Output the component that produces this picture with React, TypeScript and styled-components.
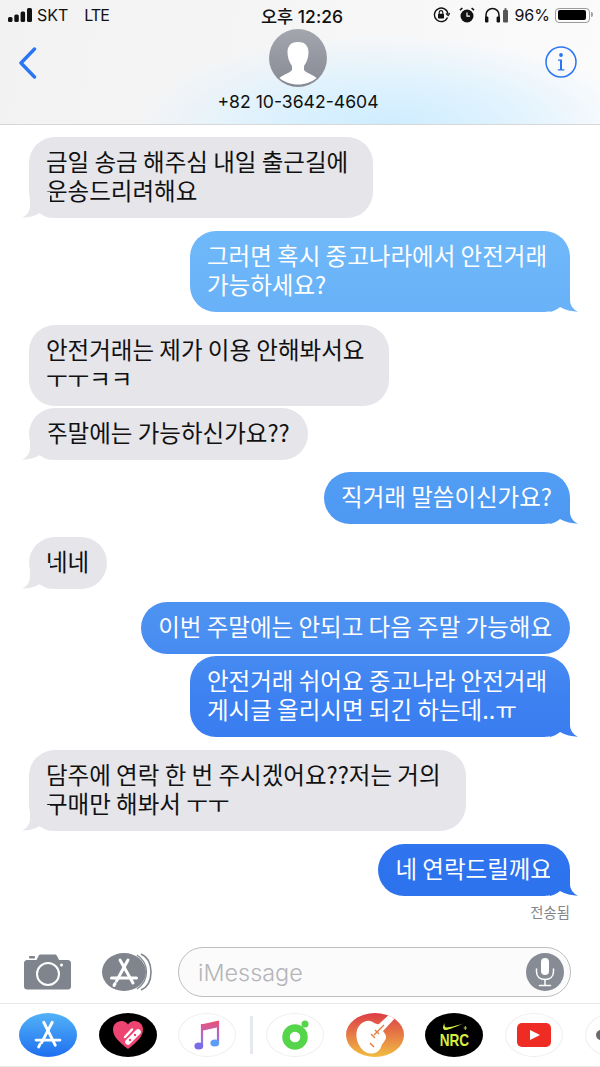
import styled, {createGlobalStyle, css} from "styled-components";

const GlobalStyle = createGlobalStyle`
  html, body {
    margin: 0;
    padding: 0;
    background: #fff;
  }

  body {
    font-family: "Noto Sans CJK KR", "Noto Sans", sans-serif;
  }
`

const Screen = styled.div`
  width: 600px;
  height: 1067px;
  overflow: hidden;
  display: flex;
  flex-direction: column;
  background: #fff;
`

const Header = styled.header`
  height: 124px;
  flex-shrink: 0;
  border-bottom: 1px solid #d8d8da;
  background:
    radial-gradient(ellipse 250px 95px at 385px 130px, #cdecff 0%, rgba(214, 240, 255, 0.8) 45%, rgba(240, 248, 252, 0) 100%),
    linear-gradient(100deg, #f2f2f3 0%, #f5f5f6 45%, #fbfbfc 100%);
`

const StatusBar = styled.div`
  height: 30px;
  display: grid;
  grid-template-columns: 1fr auto 1fr;
  align-items: center;
  padding: 0 10px 0 8px;
  font-family: Inter, "Noto Sans CJK KR", sans-serif;
  font-size: 16px;
  color: #111;
`

const StatusLeft = styled.div`
  display: flex;
  align-items: center;
  gap: 5px;
`

const Carrier = styled.span<{ $gap?: number; $tight?: boolean }>`
  margin-left: ${({$gap}) => $gap ?? 0}px;
  letter-spacing: ${({$tight}) => $tight ? -1 : 0}px;
`

const Clock = styled.div`
  font-weight: 500;
  font-size: 17.5px;
  margin-left: 6px;
`

const StatusRight = styled.div`
  display: flex;
  align-items: center;
  justify-content: flex-end;
  gap: 9px;
`

const Percent = styled.span`
  margin-right: -4px;
  margin-left: -3px;
`

const Battery = styled.div`
  position: relative;
  width: 35px;
  height: 15px;
  box-sizing: border-box;
  border: 1.5px solid #9a9a9a;
  border-radius: 4px;
  padding: 1.5px;

  &::before {
    content: "";
    display: block;
    height: 100%;
    width: 96%;
    border-radius: 2px;
    background: #000;
  }

  &::after {
    content: "";
    position: absolute;
    right: -4px;
    top: 3.5px;
    width: 2px;
    height: 5px;
    border-radius: 0 2px 2px 0;
    background: #a0a0a0;
  }
`

const NavRow = styled.div`
  display: grid;
  grid-template-columns: 1fr auto 1fr;
  align-items: start;
  padding: 0 23px 0 19px;
`

const BackButton = styled.div`
  margin-top: 17px;
  height: 32px;
`

const InfoButton = styled.div`
  margin-top: 16px;
  justify-self: end;
`

const Contact = styled.div`
  display: flex;
  flex-direction: column;
  align-items: center;
`

const Avatar = styled.div`
  width: 58px;
  height: 58px;
  border-radius: 50%;
  overflow: hidden;
  margin-top: -1px;
  background: linear-gradient(#a3a6ad, #878a94);
`

const Phone = styled.div`
  margin-top: 6px;
  font-family: Inter, sans-serif;
  font-size: 17.6px;
  line-height: 18px;
  color: #111;
`

const MessageList = styled.main`
  flex: 1;
  display: flex;
  flex-direction: column;
  padding: 12px 30px 0 29px;
`

const Bubble = styled.div<{ $mine?: boolean; $tail?: boolean; $gap?: number; $multi: boolean }>`
  position: relative;
  width: fit-content;
  box-sizing: border-box;
  margin-top: ${({$gap}) => $gap ?? 13}px;
  border-radius: 26px;
  padding: 10px ${({$multi}) => $multi ? 25 : 18}px 13px 17px;
  font-size: 23.5px;
  line-height: 29px;
  white-space: pre;
  color: #111;
  background: #e5e5ea;

  &:first-child {
    margin-top: 0;
  }

  ${({$mine, $multi}) => $mine && css`
    align-self: flex-end;
    padding-left: 17px;
    padding-right: ${$multi ? 23 : 18}px;
    color: #fff;
    background: linear-gradient(#6fb9f9 230px, #69b1f8 310px, #4f9af3 500px, #4b90f1 630px, #3d80f1 700px, #2e73ee 870px) fixed;
  `}

  ${({$tail, $mine}) => $tail && css`
    &::after {
      content: "";
      position: absolute;
      bottom: 0;
      width: 28px;
      height: 26px;
      background: inherit;
      ${$mine ? css`
        right: -8px;
        clip-path: path("M0 0H20V14C20 19 23 23.5 28 25.7C22 25.5 15 24 10 21C7 23.5 3 25.5 0 26Z");
      ` : css`
        left: -7px;
        clip-path: path("M28 0H8V14C8 19 5 23.5 0 25.7C6 25.5 13 24 18 21C21 23.5 25 25.5 28 26Z");
      `}
    }
  `}
`

const Delivered = styled.div`
  align-self: flex-end;
  margin-top: 7px;
  font-size: 14.4px;
  line-height: 18px;
  color: #85858a;
`

const Composer = styled.div`
  flex-shrink: 0;
  display: flex;
  align-items: center;
  padding: 0 29px 6px 24px;
`

const ComposerIcon = styled.div<{ $width: number; $gap: number }>`
  display: flex;
  width: ${({$width}) => $width}px;
  margin-right: ${({$gap}) => $gap}px;
`

const InputPill = styled.div`
  flex: 1;
  height: 50px;
  box-sizing: border-box;
  display: flex;
  align-items: center;
  justify-content: space-between;
  padding: 0 6px 0 19px;
  border: 1.5px solid #bcbdbf;
  border-radius: 25px;
  background: #fbfbfb;
`

const Placeholder = styled.span`
  font-family: Inter, sans-serif;
  font-size: 23.4px;
  font-weight: 300;
  color: #b4b5b9;
`

const MicButton = styled.div`
  width: 38px;
  height: 38px;
  border-radius: 50%;
  display: flex;
  align-items: center;
  justify-content: center;
  background: #878b94;
`

const AppDrawer = styled.div`
  flex-shrink: 0;
  height: 64px;
  box-sizing: border-box;
  display: flex;
  align-items: center;
  gap: 21.7px;
  padding-left: 19px;
  border-top: 1px solid #e8e8e8;
  border-bottom: 1px solid #e8e8e8;
  overflow: hidden;
`

const AppIcon = styled.div<{ $bg?: string }>`
  width: 58px;
  height: 44px;
  flex-shrink: 0;
  border-radius: 50%;
  overflow: hidden;
  display: flex;
  align-items: center;
  justify-content: center;
  box-sizing: border-box;
  background: ${({$bg}) => $bg ?? "#fff"};
  ${({$bg}) => !$bg && css`
    border: 1px solid #efefef;
  `}
`

const DrawerDivider = styled.div`
  width: 3px;
  height: 38px;
  flex-shrink: 0;
  margin: 0 -8.7px 0 -8px;
  background: #e6e8f0;
`

const NrcMark = styled.div`
  display: flex;
  flex-direction: column;
  align-items: center;
  font-family: "Liberation Sans", sans-serif;
  font-size: 17px;
  line-height: 15px;
  font-weight: 700;
  color: #d8ee3f;
  transform: scaleX(0.8);
`

const MoreDot = styled.div`
  width: 10px;
  height: 10px;
  border-radius: 50%;
  background: #6a6a6e;
  margin-left: 10px;
  margin-right: auto;
`

function AppStoreGlyph({size, color}: { size: number; color: string }): JSX.Element {
  return (
    <svg width={size} height={size} viewBox="0 0 40 40" fill="none" stroke={color} strokeWidth="3.4" strokeLinecap="round">
      <path d="M25 5L12.5 29"/>
      <path d="M15 5L28.5 32"/>
      <path d="M6 26H34"/>
      <path d="M9 34L10.5 31"/>
    </svg>
  )
}

const messages = [
  {text: "금일 송금 해주심 내일 출근길에\n운송드리려해요", tail: true},
  {text: "그러면 혹시 중고나라에서 안전거래\n가능하세요?", mine: true, tail: true},
  {text: "안전거래는 제가 이용 안해봐서요\nㅜㅜㅋㅋ"},
  {text: "주말에는 가능하신가요??", tail: true, gap: 2},
  {text: "직거래 말씀이신가요?", mine: true, tail: true, gap: 12},
  {text: "네네", tail: true},
  {text: "이번 주말에는 안되고 다음 주말 가능해요", mine: true},
  {text: "안전거래 쉬어요 중고나라 안전거래\n게시글 올리시면 되긴 하는데..ㅠ", mine: true, tail: true, gap: 2},
  {text: "담주에 연락 한 번 주시겠어요??저는 거의\n구매만 해봐서 ㅜㅜ", tail: true},
  {text: "네 연락드릴께요", mine: true, tail: true},
]

export default function App(): JSX.Element {
  return (
    <Screen>
      <GlobalStyle/>
      <Header>
        <StatusBar>
          <StatusLeft>
            <svg width="24" height="14" viewBox="0 0 24 14" fill="#111">
              <rect x="0" y="9" width="4.5" height="5" rx="1.5"/>
              <rect x="6.3" y="6.5" width="4.5" height="7.5" rx="1.5"/>
              <rect x="12.6" y="3.5" width="4.5" height="10.5" rx="1.5"/>
              <rect x="19" y="0" width="5" height="14" rx="1.5"/>
            </svg>
            <Carrier>SKT</Carrier>
            <Carrier $gap={11} $tight>LTE</Carrier>
          </StatusLeft>
          <Clock>오후 12:26</Clock>
          <StatusRight>
            <svg width="17" height="16" viewBox="0 0 17 16" fill="none" stroke="#111" strokeWidth="1.4">
              <path d="M14.5 10.5A6.8 6.8 0 1 1 15 7"/>
              <path d="M13 6.5L15.2 8.6L16.8 6.2" strokeWidth="1.2"/>
              <rect x="5" y="6.8" width="6" height="4.6" rx="0.6" fill="#111" stroke="none"/>
              <path d="M6.2 7V5.4a1.8 1.8 0 0 1 3.6 0V7" strokeWidth="1.1"/>
            </svg>
            <svg width="16" height="16" viewBox="0 0 16 16" fill="#111">
              <circle cx="8" cy="9" r="6.5"/>
              <path d="M8 5.5V9.2H11" stroke="#fff" strokeWidth="1.2" fill="none"/>
              <path d="M1 3.2L3.4 1M15 3.2L12.6 1" stroke="#111" strokeWidth="1.6"/>
            </svg>
            <svg width="24" height="16" viewBox="0 0 24 16" fill="none">
              <path d="M2 12V8a6.5 6.5 0 0 1 13 0v4" stroke="#111" strokeWidth="1.5"/>
              <rect x="1" y="9.5" width="3.4" height="6" rx="1.2" fill="#111"/>
              <rect x="12.6" y="9.5" width="3.4" height="6" rx="1.2" fill="#111"/>
              <rect x="19" y="3" width="5" height="12.5" rx="1" fill="#555"/>
              <rect x="20.5" y="1.2" width="2" height="2" fill="#555"/>
            </svg>
            <Percent>96%</Percent>
            <Battery/>
          </StatusRight>
        </StatusBar>
        <NavRow>
          <BackButton>
            <svg width="18" height="32" viewBox="0 0 18 32" fill="none" stroke="#2a75f3" strokeWidth="3.4" strokeLinecap="round" strokeLinejoin="round">
              <path d="M15.5 2L2 16L15.5 30"/>
            </svg>
          </BackButton>
          <Contact>
            <Avatar>
              <svg width="58" height="58" viewBox="0 0 58 58" fill="#fff">
                <path d="M29 13C21 13 18.5 18 18.5 23C18.5 28 20 33 23 37V41C21 44 14 45.5 10.5 49C15 53 22 55.5 29 55.5C36 55.5 43 53 47.5 49C44 45.5 37 44 35 41V37C38 33 39.5 28 39.5 23C39.5 18 37 13 29 13Z"/>
              </svg>
            </Avatar>
            <Phone>+82 10-3642-4604</Phone>
          </Contact>
          <InfoButton>
            <svg width="32" height="32" viewBox="0 0 32 32" fill="none">
              <circle cx="16" cy="16" r="15" stroke="#2a75f3" strokeWidth="1.5"/>
              <circle cx="16" cy="9" r="1.9" fill="#2a75f3"/>
              <path d="M13 13.4H17V23.2H19.4V24.6H12.8V23.2H15V14.8H13Z" fill="#2a75f3"/>
            </svg>
          </InfoButton>
        </NavRow>
      </Header>

      <MessageList>
        {messages.map((m) => (
          <Bubble key={m.text} $mine={m.mine} $tail={m.tail} $gap={m.gap} $multi={m.text.includes("\n")}>
            {m.text}
          </Bubble>
        ))}
        <Delivered>전송됨</Delivered>
      </MessageList>

      <Composer>
        <ComposerIcon $width={47} $gap={31}>
          <svg width="47" height="36" viewBox="0 0 47 36" fill="#7f848d">
            <rect x="5" y="2" width="6" height="2.5" rx="1"/>
            <path d="M3 6H12.5L14.5 2C15 1 15.5 0.5 16.500 0.5H31C32 0.5 32.5 1 33 2L35 6H44C45.6 6 47 7.4 47 9V32.5C47 34.2 45.6 35.5 44 35.5H3C1.4 35.5 0 34.2 0 32.5V9C0 7.4 1.4 6 3 6Z"/>
            <circle cx="24" cy="20" r="11" fill="none" stroke="#fff" strokeWidth="2"/>
            <circle cx="37.5" cy="11" r="1.5" fill="#fff"/>
          </svg>
        </ComposerIcon>
        <ComposerIcon $width={51} $gap={25}>
          <svg width="51" height="38" viewBox="0 0 51 38" fill="none">
            <ellipse cx="22" cy="19" rx="22" ry="19" fill="#7f848d"/>
            <path d="M39 1C46 4 49 11 49 19C49 27 46 34 39 37" stroke="#7f848d" strokeWidth="1.6"/>
            <path d="M35 2C41 6 44.5 12 44.5 19C44.5 26 41 32 35 36" stroke="#7f848d" strokeWidth="1.2"/>
            <g stroke="#fff" strokeWidth="3" strokeLinecap="round">
              <path d="M26 7L14.5 28"/>
              <path d="M18 7L31 30"/>
              <path d="M9.5 25H34.5"/>
              <path d="M12 32.5L13 30.5"/>
            </g>
          </svg>
        </ComposerIcon>
        <InputPill>
          <Placeholder>iMessage</Placeholder>
          <MicButton>
            <svg width="24" height="32" viewBox="0 0 24 32" fill="none" stroke="#fff" strokeWidth="1.5" strokeLinecap="round">
              <rect x="8" y="2" width="8" height="17" rx="4" fill="#fff" stroke="none"/>
              <path d="M3.5 13V15.5C3.5 20.5 7 23.5 12 23.5C17 23.5 20.5 20.5 20.5 15.5V13"/>
              <path d="M12 23.5V29M6.5 29.5H17.5"/>
            </svg>
          </MicButton>
        </InputPill>
      </Composer>

      <AppDrawer>
        <AppIcon $bg="linear-gradient(#52b2f7, #1f6ff0)">
          <AppStoreGlyph size={34} color="#fff"/>
        </AppIcon>
        <AppIcon $bg="#000">
          <svg width="34" height="30" viewBox="0 0 34 30">
            <path d="M17 29C8 22 2 16.5 2 9.5C2 4.5 6 1 10.5 1C13.3 1 15.6 2.3 17 4.5C18.4 2.3 20.7 1 23.5 1C28 1 32 4.5 32 9.5C32 16.5 26 22 17 29Z" fill="#ee4472"/>
            <path d="M17 22L27 12" stroke="#fff" strokeWidth="5.5" strokeLinecap="round"/>
            <path d="M14 17L21 9.5" stroke="#fff" strokeWidth="2.5" strokeLinecap="round"/>
            <circle cx="19" cy="20" r="1.2" fill="#ee4472"/>
            <circle cx="24" cy="15" r="1.2" fill="#ee4472"/>
          </svg>
        </AppIcon>
        <AppIcon>
          <svg width="26" height="30" viewBox="0 0 26 30" fill="none">
            <defs>
              <linearGradient id="noteFill" gradientUnits="userSpaceOnUse" x1="12" y1="0" x2="12" y2="30">
                <stop offset="0" stopColor="#f1506a"/>
                <stop offset="0.5" stopColor="#b565c9"/>
                <stop offset="1" stopColor="#5b8df5"/>
              </linearGradient>
            </defs>
            <path d="M24 1V23" stroke="url(#noteFill)" strokeWidth="2.2"/>
            <path d="M8 4V26" stroke="url(#noteFill)" strokeWidth="2.2"/>
            <path d="M7 4.5L25 0.5V7L7 11Z" fill="url(#noteFill)"/>
            <ellipse cx="4.8" cy="26" rx="4.4" ry="3.6" fill="#7a6be6"/>
            <ellipse cx="20.8" cy="23" rx="4.4" ry="3.6" fill="#5b9df5"/>
          </svg>
        </AppIcon>
        <DrawerDivider/>
        <AppIcon>
          <svg width="34" height="34" viewBox="0 0 34 34" fill="none">
            <circle cx="17" cy="19" r="9" stroke="#55d64a" strokeWidth="7.5"/>
            <circle cx="27" cy="6" r="3.5" fill="#55d64a"/>
          </svg>
        </AppIcon>
        <AppIcon $bg="linear-gradient(#dd3c47, #f0bd42)">
          <svg width="58" height="44" viewBox="0 0 58 44">
            <path d="M24 8C19 7 13 11 11 17C9 25 12 33 18 38C25 43 33 40 35 34C36 30 40 28 40 24C40 21 38 20 37 18L52 2L47 -2L33 11C30 12 28 9 24 8Z" fill="#fff"/>
            <path d="M28 22L38 12M29 17L33 21M25 21L29 25" stroke="#e67b3c" strokeWidth="1.4"/>
            <path d="M24 30L28 34" stroke="#e67b3c" strokeWidth="1.4"/>
          </svg>
        </AppIcon>
        <AppIcon $bg="#000">
          <NrcMark>
            <svg width="34" height="11" viewBox="0 0 34 11" fill="#d8ee3f">
              <path d="M5 1C2 5 3 8.5 7 8C12 7.3 20 4.5 29 1.5C20 3.5 12 5.3 8 5.5C5.5 5.6 4.5 3.8 5 1Z"/>
              <path d="M31 4V8M29 6H33" stroke="#d8ee3f" strokeWidth="0.9"/>
            </svg>
            NRC
          </NrcMark>
        </AppIcon>
        <AppIcon>
          <svg width="36" height="26" viewBox="0 0 36 26">
            <rect x="1" y="1" width="34" height="24" rx="5" fill="#ee2c24"/>
            <path d="M14 8L24 13L14 18Z" fill="#fff"/>
          </svg>
        </AppIcon>
        <AppIcon>
          <MoreDot/>
        </AppIcon>
      </AppDrawer>
    </Screen>
  )
}
